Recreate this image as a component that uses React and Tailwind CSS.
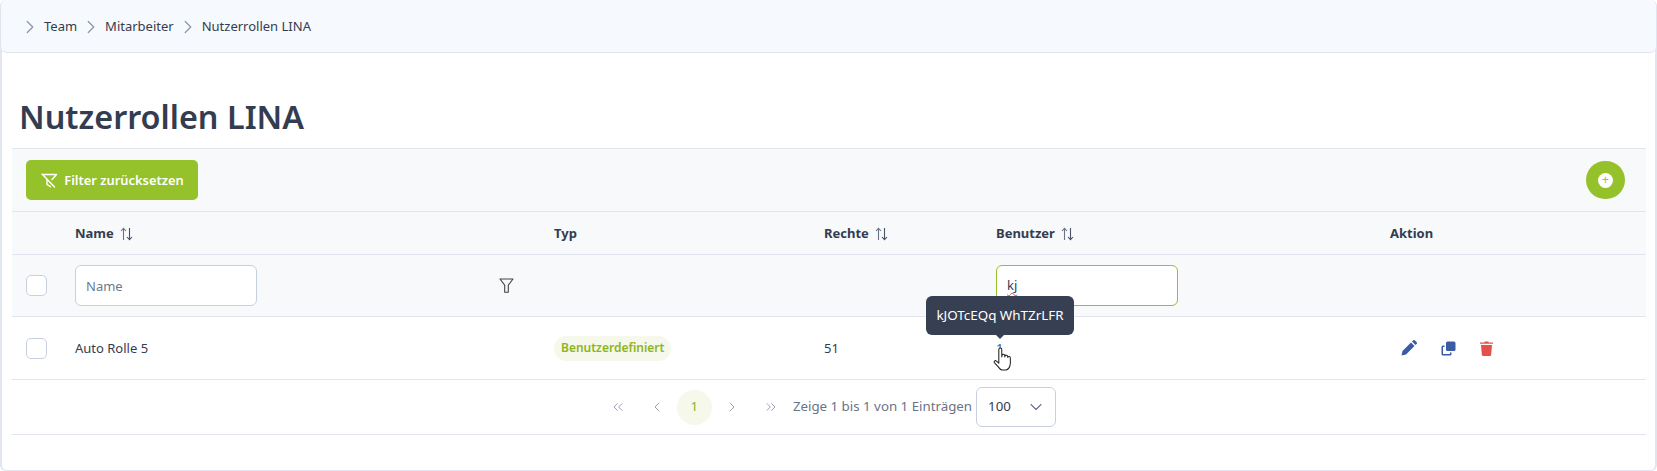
import { ChevronRight, ChevronLeft, ChevronDown, ChevronsLeft, ChevronsRight } from "lucide-react";

const cols = "grid grid-cols-[63px_479px_270px_172px_394px_256px] items-center";

function SortIcon() {
    return (
        <svg width="13" height="14" viewBox="0 0 13 14" fill="none" strokeWidth="1.1" className="ml-[6px]">
            <path d="M3.500 13V1.500M1 4l2.500-2.700L6 4" stroke="#6b7385" />
            <path d="M9.500 1v11.500M7 10l2.500 2.700L12 10" stroke="#4a5266" />
        </svg>
    );
}

function HeadCell({ label, sort }) {
    return (
        <div className="flex items-center pt-[1px] text-[13px] font-bold text-[#343c50]">
            {label}
            {sort && <SortIcon />}
        </div>
    );
}

function Checkbox() {
    return <div className="ml-[14px] h-[21px] w-[21px] rounded-[5px] border border-[#c8d0e0] bg-white"></div>;
}

function Crumb({ label }) {
    return (
        <>
            <ChevronRight size={22} strokeWidth={1.3} className="text-[#8b93a7]" />
            <span>{label}</span>
        </>
    );
}

function FilterSlashIcon() {
    return (
        <svg width="18" height="17" viewBox="0 0 18 17" fill="none" stroke="white" strokeWidth="1.4" strokeLinecap="round" strokeLinejoin="round">
            <path d="M4 2.500h12.500l-4.500 5M2 2l12.500 13" />
            <path d="M7 7.500v5l3.500 2.200" />
        </svg>
    );
}

function FunnelIcon() {
    return (
        <svg width="15" height="15" viewBox="0 0 15 15" fill="none" stroke="#444" strokeWidth="1.1" strokeLinejoin="round" className="ml-[242px]">
            <path d="M1 1h13L9.300 7.200v7H5.700v-7z" />
        </svg>
    );
}

function PencilIcon() {
    return (
        <svg width="16" height="16" viewBox="0 0 16 16" fill="#3b5ba5">
            <path d="M0.500 15.500l1-4.500L10 2.500l3.500 3.500L5 14.500z" />
            <path d="M11 1.500l1-1a1.400 1.400 0 0 1 2 0l1.500 1.500a1.400 1.400 0 0 1 0 2l-1 1z" />
        </svg>
    );
}

function CopyIcon() {
    return (
        <svg width="15" height="15" viewBox="0 0 15 15" className="text-[#3b5ba5]">
            <rect x="5" y="0.500" width="9.500" height="9.500" rx="1.500" fill="currentColor" />
            <path d="M3.500 4.500H2A1.500 1.500 0 0 0 .500 6v7A1.500 1.500 0 0 0 2 14.500h7a1.500 1.500 0 0 0 1.500-1.500v-1.500H9V13H2V6h1.500z" fill="currentColor" />
        </svg>
    );
}

function TrashIcon() {
    return (
        <svg width="13" height="15" viewBox="0 0 13 15" fill="#e5514a">
            <path d="M0 1.500h4.500V.500h4v1H13v1.200H0z" />
            <path d="M1 4h11l-.8 9.500A1.500 1.500 0 0 1 9.700 15H3.300a1.500 1.500 0 0 1-1.500-1.500z" />
        </svg>
    );
}

function HandCursor() {
    return (
        <svg width="19" height="25" viewBox="0 0 18 23" className="absolute left-[993px] top-[347px]">
            <path
                d="M5.500 2a1.400 1.400 0 0 1 2.800 0v7l.3-1.600a1.300 1.300 0 0 1 2.500.2l.1 1.400.2-.8a1.300 1.300 0 0 1 2.500.3l.1 1.100a1.200 1.200 0 0 1 2.400.4c.2 3 .2 5.500-.4 7.500-.6 2-1.800 3.500-3.500 4h-4c-1.500-.4-2.500-1.500-3.500-3L1.300 14.500c-.8-1.200.8-2.700 2-1.500l2.200 2z"
                fill="white"
                stroke="#222"
                strokeWidth="1"
                strokeLinejoin="round"
            />
        </svg>
    );
}

export default function App() {
    return (
        <div className="relative h-[471px] w-[1657px] overflow-hidden bg-white font-['Noto_Sans','Open_Sans',sans-serif] text-[#343c50]">
            <div className="h-[471px] rounded-[6px] border-x-[2px] border-b border-[#e1e5ee]">
                {/* breadcrumb */}
                <div className="-mx-[1px] flex h-[53px] items-center gap-[3px] rounded-[6px] border-b border-[#e1e5ee] bg-[#f6f9fd] pl-[18px] pt-[1px] text-[13px]">
                    <Crumb label="Team" />
                    <Crumb label="Mitarbeiter" />
                    <Crumb label="Nutzerrollen LINA" />
                </div>

                <h1 className="ml-[17px] mt-[40px] h-[55px] text-[32.4px] font-semibold leading-[46px] text-[#343c50]">Nutzerrollen LINA</h1>

                <div className="ml-[10px] w-[1634px]">
                    {/* toolbar */}
                    <div className="flex h-[64px] items-center justify-between border-y border-[#e1e5ee] bg-[#f8f9fb] pl-[14px] pr-[21px]">
                        <button className="flex h-[40px] w-[172px] items-center justify-center gap-[6px] rounded-[5px] bg-[#95c12b] pt-[1px] text-[12.9px] font-semibold text-white">
                            <FilterSlashIcon />
                            Filter zurücksetzen
                        </button>
                        <div className="flex h-[38px] w-[39px] items-center justify-center rounded-full bg-[#95c12b]">
                            <div className="flex h-[15px] w-[15px] items-center justify-center rounded-full bg-white text-[12px] leading-none text-[#95c12b]">+</div>
                        </div>
                    </div>

                    {/* header */}
                    <div className={`${cols} h-[43px] border-b border-[#e1e5ee] bg-[#f8f9fb]`}>
                        <div></div>
                        <HeadCell label="Name" sort />
                        <HeadCell label="Typ" />
                        <HeadCell label="Rechte" sort />
                        <HeadCell label="Benutzer" sort />
                        <HeadCell label="Aktion" />
                    </div>

                    {/* filter row */}
                    <div className={`${cols} h-[62px] border-b border-[#e1e5ee] bg-[#f8f9fb]`}>
                        <Checkbox />
                        <div className="flex items-center">
                            <input
                                readOnly
                                placeholder="Name"
                                className="h-[41px] w-[182px] rounded-[6px] border border-[#c8d0e0] bg-white px-[10px] text-[13px] outline-none placeholder:text-[#6b7a8c]"
                            />
                            <FunnelIcon />
                        </div>
                        <div></div>
                        <div></div>
                        <div className="flex h-[41px] w-[182px] items-center rounded-[6px] border border-[#95c12b] bg-white px-[10px] text-[13px]">
                            <span className="underline decoration-[#e0503f] decoration-wavy decoration-1 underline-offset-2 [text-decoration-skip-ink:none]">kj</span>
                        </div>
                        <div></div>
                    </div>

                    {/* data row */}
                    <div className={`${cols} h-[63px] border-b border-[#e1e5ee] bg-white text-[13px]`}>
                        <Checkbox />
                        <div className="pt-[1px]">Auto Rolle 5</div>
                        <div>
                            <span className="inline-flex h-[25px] items-center rounded-full bg-[#f5f8ea] px-[7px] text-[12px] font-semibold text-[#8db51f]">Benutzerdefiniert</span>
                        </div>
                        <div className="pt-[1px]">51</div>
                        <div className="pt-[1px] text-[#3b5ba5]">1</div>
                        <div className="flex items-center gap-[24px] pl-[11px]">
                            <PencilIcon />
                            <CopyIcon />
                            <TrashIcon />
                        </div>
                    </div>

                    {/* paginator */}
                    <div className="flex h-[55px] items-center justify-center border-b border-[#e1e5ee] pl-[8px] text-[13.3px] text-[#6b7385]">
                        <ChevronsLeft size={16} strokeWidth={1.5} className="mr-[23px] text-[#9aa2b5]" />
                        <ChevronLeft size={16} strokeWidth={1.5} className="mr-[12px] text-[#9aa2b5]" />
                        <span className="flex h-[35px] w-[35px] items-center justify-center rounded-full bg-[#f5f8ea] text-[#8db51f]">1</span>
                        <ChevronRight size={16} strokeWidth={1.5} className="ml-[12px] text-[#9aa2b5]" />
                        <ChevronsRight size={16} strokeWidth={1.5} className="ml-[23px] text-[#9aa2b5]" />
                        <span className="ml-[14px]">Zeige 1 bis 1 von 1 Einträgen</span>
                        <div className="ml-[4px] flex h-[40px] w-[80px] items-center justify-between rounded-[6px] border border-[#c8d0e0] bg-white pl-[11px] pr-[9px] text-[#343c50]">
                            100
                            <ChevronDown size={20} strokeWidth={1.3} className="text-[#6b7385]" />
                        </div>
                    </div>
                </div>
            </div>

            {/* tooltip over the user count */}
            <div className="absolute left-[926px] top-[296px] flex h-[39px] w-[148px] items-center justify-center rounded-[6px] bg-[#373f53] text-[13.4px] text-white">
                kJOTcEQq WhTZrLFR
                <div className="absolute -bottom-[4px] left-[70px] h-0 w-0 border-x-[4px] border-t-[4px] border-x-transparent border-t-[#373f53]"></div>
            </div>
            <HandCursor />
        </div>
    );
}
